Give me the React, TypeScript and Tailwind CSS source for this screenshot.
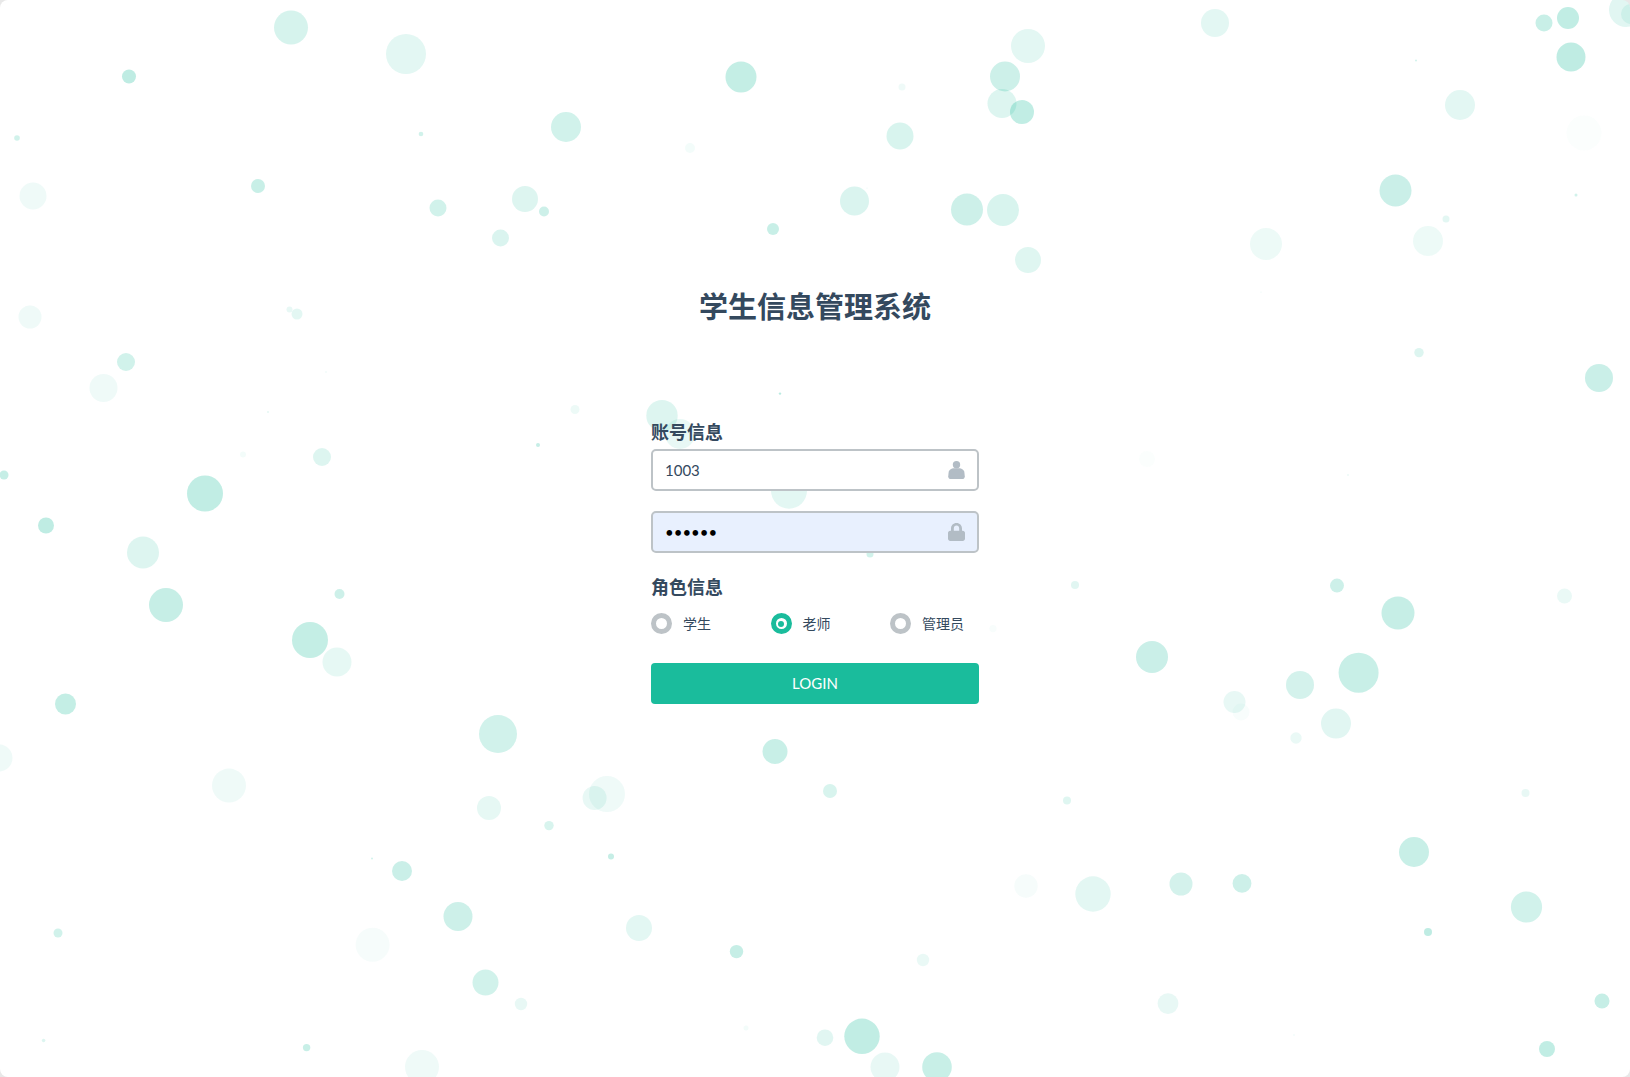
const FONT = "font-['Lato','Noto_Sans_CJK_SC',sans-serif]";

// x, y, r, opacity
const bubbles: [number, number, number, number][] = [
  [291, 27.5, 17, 0.18], [406, 54, 20, 0.12], [129, 76.5, 7, 0.28], [741, 77, 15.5, 0.26],
  [17, 138, 2.8, 0.2], [421, 134, 2.3, 0.2], [566, 127, 15, 0.2], [690, 148, 5, 0.05],
  [33, 196, 13.5, 0.07], [258, 186, 7, 0.24], [438, 208, 8.5, 0.2], [525, 199, 13, 0.15],
  [544, 211.5, 5, 0.22], [500.5, 238, 8.5, 0.16], [773, 229, 6, 0.24], [30, 317, 11.5, 0.07],
  [289.5, 309.5, 3, 0.1], [297, 314, 5.5, 0.12], [126, 362, 9, 0.2], [103.5, 388, 14, 0.07],
  [575, 409.5, 4.5, 0.08], [662, 415.7, 15.7, 0.15], [789, 490.7, 18, 0.12], [205, 493.5, 18, 0.27],
  [46, 525.5, 8, 0.28], [322, 457, 9, 0.15], [243, 454.5, 3, 0.05], [4, 475, 4.5, 0.25],
  [538, 445, 2, 0.25], [326, 372, 0.8, 0.1], [268, 412, 0.8, 0.2], [780, 393.6, 1.2, 0.3],
  [680, 434, 15, 0.1],
  [1215, 23, 14, 0.12], [1028, 46, 17, 0.12], [1005, 76.5, 15, 0.22], [1002, 103.6, 14.5, 0.15],
  [1022, 112, 12, 0.27], [902, 87, 3.5, 0.07], [900, 136, 13.5, 0.17], [854.5, 201, 14.5, 0.16],
  [967, 209.5, 16, 0.22], [1003, 210, 16, 0.17], [1028, 260, 13, 0.14], [1266, 244, 16, 0.08],
  [1460, 105, 15, 0.12], [1395.5, 190.5, 16, 0.23], [1446, 219, 3.5, 0.12], [1428, 241, 15, 0.08],
  [1584, 133, 17.5, 0.02], [1544, 23, 8.5, 0.24], [1568, 18, 11, 0.27], [1571, 57, 14.5, 0.28],
  [1626, 10, 17, 0.13], [1631, 14, 10, 0.1], [1576, 195, 1.5, 0.2], [1416, 60.6, 1, 0.2],
  [1419, 352.6, 4.7, 0.15], [1599, 378, 14, 0.23], [1147, 459, 8, 0.02], [1348, 475, 1, 0.08],
  [1261, 292, 0.6, 0.1], [867, 188, 0.6, 0.1],
  [143, 552.5, 16, 0.15], [166, 605, 17, 0.25], [339.5, 594, 5, 0.22], [310, 640, 18, 0.26],
  [337, 662, 14.5, 0.11], [65.5, 704, 10.5, 0.26], [498, 734, 19, 0.2], [-1, 758, 13.5, 0.07],
  [229, 785.6, 17, 0.07], [607, 794, 18, 0.07], [594.6, 798, 12, 0.1], [489, 808, 12, 0.11],
  [549, 825.6, 4.7, 0.17], [611, 856.6, 3, 0.25], [372, 858.6, 1, 0.2], [402, 871, 10, 0.23],
  [458, 916.5, 14.5, 0.22], [639, 928, 13, 0.12], [372.6, 944.7, 17, 0.04], [58, 933, 4.5, 0.2],
  [485.5, 982.6, 13, 0.2], [521, 1004, 6.2, 0.1], [736.5, 951.6, 6.7, 0.25], [746, 1028, 2.5, 0.05],
  [43.6, 1040.5, 1.8, 0.15], [306.6, 1047.6, 3.7, 0.24], [422, 1067, 17, 0.07], [775, 751.5, 12.5, 0.24],
  [870, 554, 3.5, 0.2], [1075, 585, 4, 0.13], [1337, 585.6, 7, 0.22], [1398, 613, 16.5, 0.25],
  [1564.5, 596, 7.5, 0.09], [993, 628.6, 3.6, 0.03], [1152, 657, 16, 0.23], [1300, 685, 14, 0.19],
  [1358.6, 672.7, 20, 0.24], [1234.5, 702, 11, 0.1], [1241, 712, 8.5, 0.03], [1336, 723.6, 15, 0.13],
  [1296, 738, 5.7, 0.09], [830, 791, 7, 0.17], [1067, 800.4, 4, 0.14], [1525.5, 793, 4, 0.1],
  [1414, 852, 15, 0.24], [1026, 886, 11.7, 0.04], [1093, 894, 17.7, 0.12], [1181, 884, 11.5, 0.19],
  [1242, 883.4, 9.4, 0.22], [1526.5, 907, 15.6, 0.2], [1428, 932, 4, 0.28], [923, 960, 6.2, 0.09],
  [1168, 1003.6, 10.4, 0.1], [1602, 1001, 7.5, 0.25], [1547, 1049, 8, 0.27], [1294, 1035, 1, 0.05],
  [825, 1037.7, 8.3, 0.13], [862, 1036.3, 17.7, 0.27], [885, 1067, 14.5, 0.1], [937, 1067, 14.8, 0.24],
];

function UserIcon() {
  return (
    <svg className="h-[18px] w-[17px] shrink-0" viewBox="0 0 17 18" fill="#b2bcc5">
      <circle cx="8.5" cy="3.8" r="3.7" />
      <path d="M5 7.200h7c2 0.300 3.800 1.700 4.300 3.600l0.500 4.600c0 1.600-1.200 2.600-2.800 2.600H3c-1.600 0-2.800-1-2.800-2.600l0.500-4.600C1.200 8.900 3 7.500 5 7.200z" />
    </svg>
  );
}

function LockIcon() {
  return (
    <svg className="ml-[2px] h-[18px] w-[17px] shrink-0" viewBox="0 0 17 18" fill="#b2bcc5">
      <path
        fillRule="evenodd"
        d="M8.500 0C5.300 0 3 2.300 3 5.600V7.700H2.200C1 7.700 0 8.700 0 9.900v5.900C0 17 1 18 2.200 18h12.600c1.200 0 2.200-1 2.200-2.200V9.900c0-1.200-1-2.200-2.200-2.200H14V5.600C14 2.300 11.700 0 8.500 0zM5.800 7.700V5.600c0-1.800 1.100-3 2.700-3s2.700 1.200 2.700 3v2.100z"
      />
    </svg>
  );
}

function Radio({ label, checked }: { label: string; checked?: boolean }) {
  return (
    <label className="flex w-[119.5px] shrink-0 items-center">
      <span
        className={`flex h-[21px] w-[21px] shrink-0 items-center justify-center rounded-full border-[5px] bg-white ${
          checked ? "border-[#1abc9c]" : "border-[#bdc3c7]"
        }`}
      >
        {checked && <span className="h-[6px] w-[6px] rounded-full bg-[#1abc9c]" />}
      </span>
      <span className="ml-[11px] whitespace-nowrap text-[14px] text-[#34495e]">{label}</span>
    </label>
  );
}

export default function App() {
  return (
    <div className="h-[1077px] w-[1630px] bg-[#e8e8e8]">
      <div className={`relative h-[1077px] w-[1630px] overflow-hidden rounded-[8px] bg-white ${FONT}`}>
        <svg className="absolute inset-0" width="1630" height="1077">
          {bubbles.map(([x, y, r, o], i) => (
            <circle key={i} cx={x} cy={y} r={r} fill="#1abc9c" fillOpacity={o} />
          ))}
        </svg>
        <div className="relative mx-auto flex w-[328px] flex-col pt-[287px]">
          <h1 className="whitespace-nowrap text-center text-[29px] leading-[40px] font-bold text-[#34495e]">
            学生信息管理系统
          </h1>
          <div className="mt-[93px] text-[18px] leading-[24px] font-bold text-[#34495e]">账号信息</div>
          <div className="mt-[5px] flex h-[42px] items-center rounded-[5px] border-2 border-[#bdc3c7] bg-white pr-[12px] pl-[12px]">
            <input
              readOnly
              defaultValue="1003"
              className="min-w-0 flex-1 bg-transparent text-[15px] text-[#34495e] outline-none"
            />
            <UserIcon />
          </div>
          <div className="mt-[20px] flex h-[42px] items-center rounded-[5px] border-2 border-[#bdc3c7] bg-[#e8f0fe] pr-[12px] pl-[12px]">
            <input
              readOnly
              type="password"
              defaultValue="123456"
              className="min-w-0 flex-1 bg-transparent text-[15px] text-black outline-none"
            />
            <LockIcon />
          </div>
          <div className="mt-[22px] text-[18px] leading-[24px] font-bold text-[#34495e]">角色信息</div>
          <div className="mt-[14px] flex h-[21px]">
            <Radio label="学生" />
            <Radio label="老师" checked />
            <Radio label="管理员" />
          </div>
          <button className="mt-[29px] h-[41px] rounded-[4px] bg-[#1abc9c] text-[15px] text-white">LOGIN</button>
        </div>
      </div>
    </div>
  );
}
